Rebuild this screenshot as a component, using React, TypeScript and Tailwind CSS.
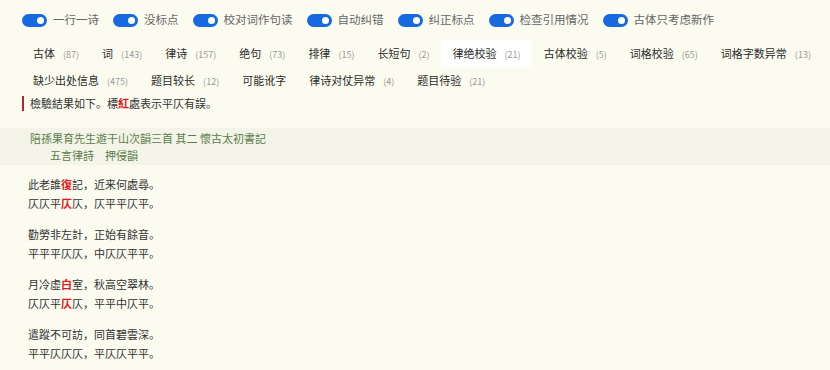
import React from 'react';

const toggles = ['一行一诗', '没标点', '校对词作句读', '自动纠错', '纠正标点', '检查引用情况', '古体只考虑新作'];

const tabs: { name: string; count?: number; active?: boolean }[][] = [
  [
    { name: '古体', count: 87 },
    { name: '词', count: 143 },
    { name: '律诗', count: 157 },
    { name: '绝句', count: 73 },
    { name: '排律', count: 15 },
    { name: '长短句', count: 2 },
    { name: '律绝校验', count: 21, active: true },
    { name: '古体校验', count: 5 },
    { name: '词格校验', count: 65 },
    { name: '词格字数异常', count: 13 },
  ],
  [
    { name: '缺少出处信息', count: 475 },
    { name: '题目较长', count: 12 },
    { name: '可能讹字' },
    { name: '律诗对仗异常', count: 4 },
    { name: '题目待验', count: 21 },
  ],
];

// [text, index of red char]
const stanzas: [string, number][][] = [
  [['此老誰復記，近来何處尋。', 3], ['仄仄平仄仄，仄平平仄平。', 3]],
  [['勸勞非左計，正始有餘音。', -1], ['平平平仄仄，中仄仄平平。', -1]],
  [['月冷虛白室，秋高空翠林。', 3], ['仄仄平仄仄，平平中仄平。', 3]],
  [['遣蹤不可訪，同首碧雲深。', -1], ['平平仄仄仄，平仄仄平平。', -1]],
];

const Toggle = () => (
  <span className="w-[25px] h-[13px] rounded-full bg-[#1769e0] flex items-center justify-end pr-[3px] shrink-0">
    <span className="w-[7px] h-[7px] rounded-full bg-white" />
  </span>
);

const Line = ({ text, red }: { text: string; red: number }) => (
  <div className="h-[19px] leading-[19px]">
    {red < 0 ? (
      text
    ) : (
      <>
        {text.slice(0, red)}
        <span className="text-[#e8141b] font-bold">{text[red]}</span>
        {text.slice(red + 1)}
      </>
    )}
  </div>
);

export default function App() {
  return (
    <div
      className="w-[830px] h-[370px] overflow-hidden bg-[#fbfbf0] text-[#333]"
      style={{ fontFamily: '"Noto Sans CJK SC", "Noto Sans", sans-serif' }}
    >
      <div className="flex items-center h-[40px] pl-[22px] text-[11.5px] text-[#666] whitespace-nowrap">
        {toggles.map((t) => (
          <div key={t} className="flex items-center gap-[6px] mr-[14px] shrink-0">
            <Toggle />
            <span>{t}</span>
          </div>
        ))}
      </div>

      <div className="pl-[21px]">
        {tabs.map((row, i) => (
          <div key={i} className="flex h-[27px] items-stretch whitespace-nowrap">
            {row.map((tab) => (
              <div
                key={tab.name}
                className={`flex items-center shrink-0 pl-[12px] pr-[11px] text-[11px] ${tab.active ? 'bg-white' : ''}`}
              >
                <span className="text-[#2b2b2b]">{tab.name}</span>
                {tab.count !== undefined && (
                  <span className="ml-[8px] text-[9px] text-[#999] pt-[3px]">({tab.count})</span>
                )}
              </div>
            ))}
          </div>
        ))}
      </div>

      <div className="mt-[1px] ml-[22px] flex items-center h-[16px] text-[11px]">
        <span className="w-[2px] h-[15px] bg-[#b3262d] mr-[6px]" />
        <span>
          檢驗結果如下。標<span className="text-[#e8141b] font-bold">紅</span>處表示平仄有誤。
        </span>
      </div>

      <div className="mt-[17px] bg-[#f4f4e8] h-[37px] pl-[30px] text-[11px] text-[#5b7d4c] flex flex-col justify-center">
        <div className="leading-[17px]">陪孫果育先生遊干山次韻三首 其二 懷古太初書記</div>
        <div className="leading-[17px] pl-[20px]">五言律詩　押侵韻</div>
      </div>

      <div className="pl-[28px] pt-[10px] text-[11px] text-[#333] flex flex-col gap-[12px]">
        {stanzas.map((s, i) => (
          <div key={i}>
            {s.map(([text, red]) => (
              <Line key={text} text={text} red={red} />
            ))}
          </div>
        ))}
      </div>
    </div>
  );
}
